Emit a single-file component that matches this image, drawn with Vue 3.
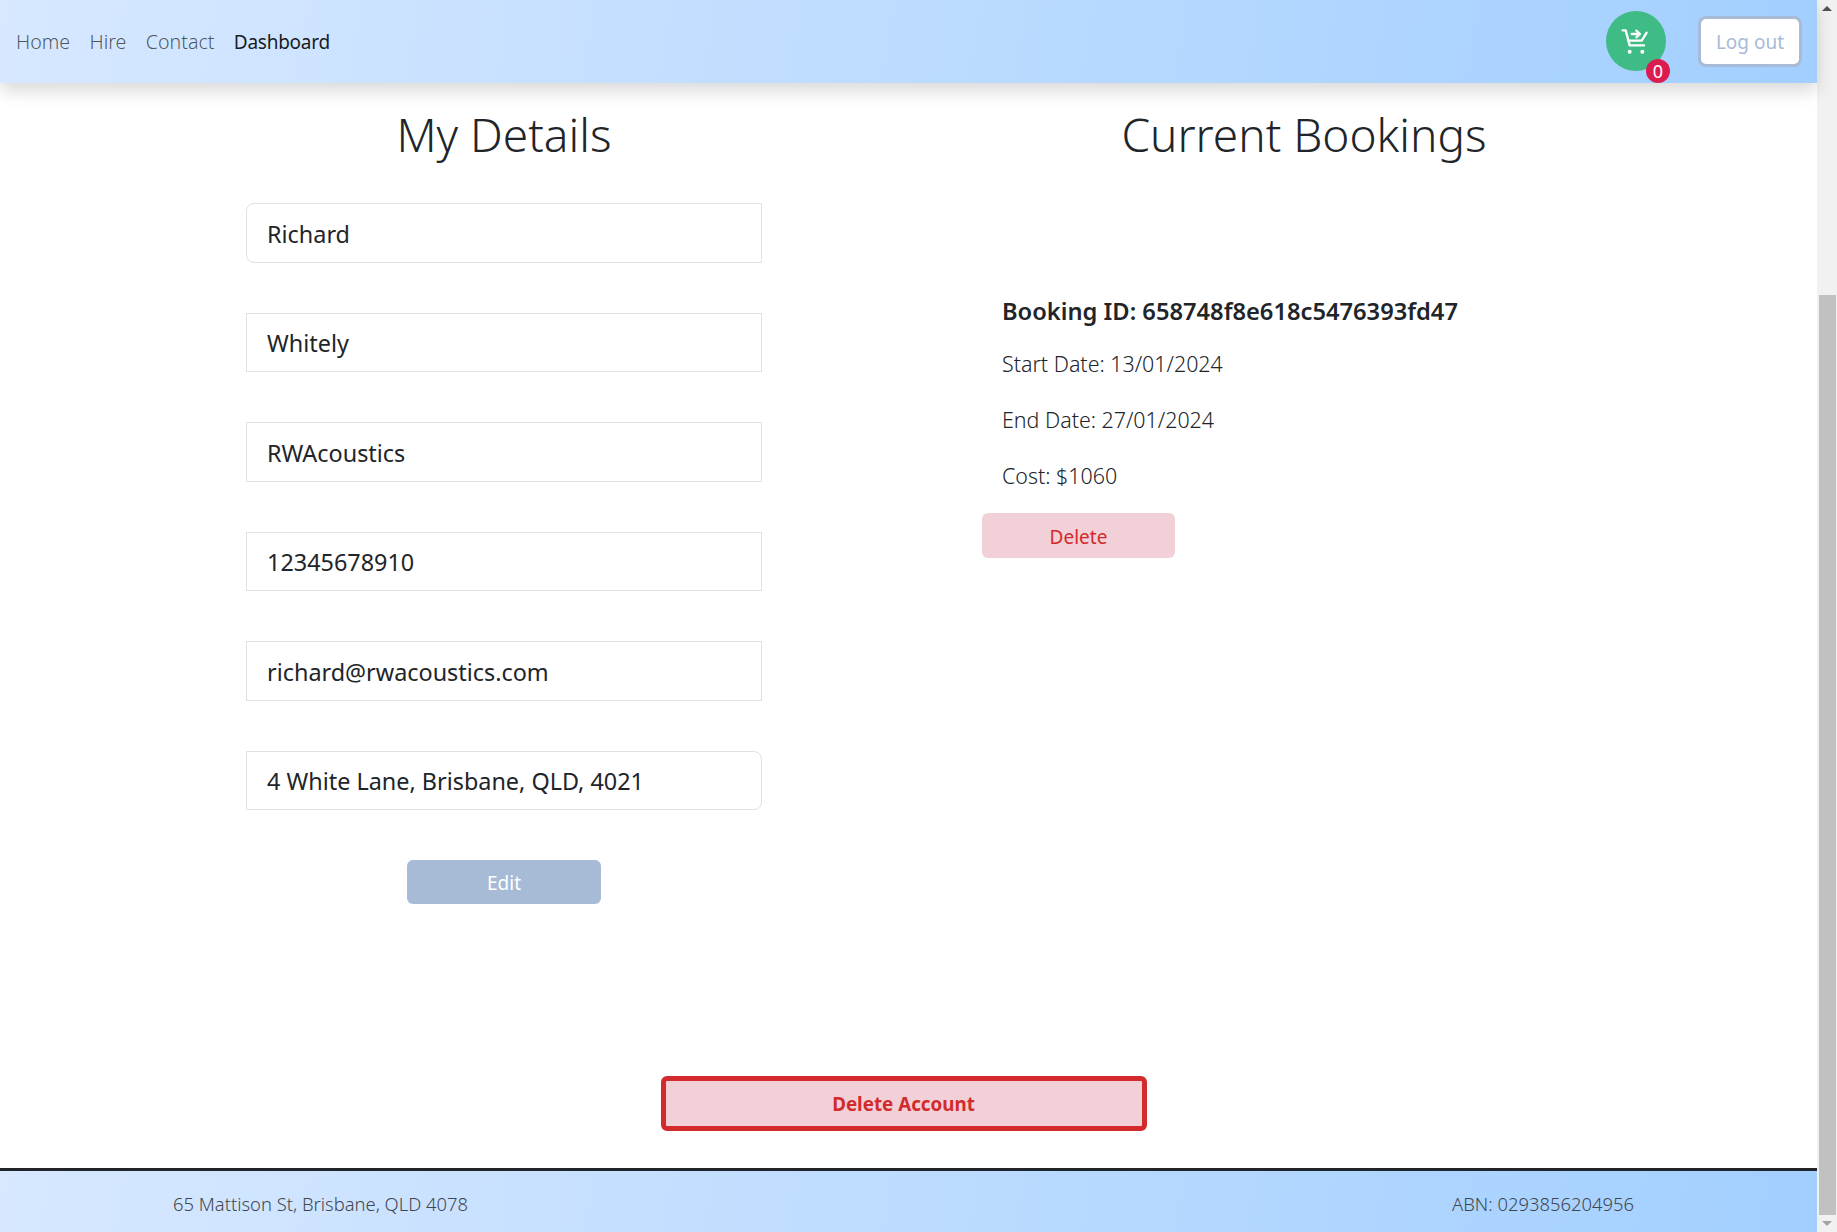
<script setup>
const fields = [
  { value: 'Richard', cls: 'first' },
  { value: 'Whitely', cls: '' },
  { value: 'RWAcoustics', cls: '' },
  { value: '12345678910', cls: '' },
  { value: 'richard@rwacoustics.com', cls: '' },
  { value: '4 White Lane, Brisbane, QLD, 4021', cls: 'last' }
]
const links = ['Home', 'Hire', 'Contact']
</script>

<template>
  <div class="window">
    <div class="page">
      <header class="navbar">
        <nav class="links">
          <a v-for="l in links" :key="l" class="link">{{ l }}</a>
          <a class="link active">Dashboard</a>
        </nav>
        <div class="actions">
          <div class="cart">
            <svg width="30" height="30" viewBox="93 78 90 90" fill="none" stroke="#fff" stroke-width="7" stroke-linecap="round" stroke-linejoin="round">
              <path d="M98 91H107L119 136H162" />
              <path d="M116 122H155L170 98" />
              <path d="M125 102H148M139 92L150 102L139 112" />
              <circle cx="119" cy="155" r="6" fill="#fff" stroke="none" />
              <circle cx="157" cy="155" r="6" fill="#fff" stroke="none" />
            </svg>
            <span class="badge">0</span>
          </div>
          <button class="logout">Log out</button>
        </div>
      </header>

      <main class="content">
        <section class="details">
          <h1 class="title">My Details</h1>
          <form class="form">
            <input v-for="f in fields" :key="f.value" class="field" :class="f.cls" :value="f.value" readonly />
            <button type="button" class="edit">Edit</button>
          </form>
        </section>
        <section class="bookings">
          <h1 class="title">Current Bookings</h1>
          <article class="booking">
            <h2 class="booking-id">Booking ID: 658748f8e618c5476393fd47</h2>
            <p class="line first-line">Start Date: 13/01/2024</p>
            <p class="line">End Date: 27/01/2024</p>
            <p class="line">Cost: $1060</p>
            <button class="delete">Delete</button>
          </article>
        </section>
      </main>

      <div class="danger">
        <button class="delete-account">Delete Account</button>
      </div>

      <footer class="footer">
        <span>65 Mattison St, Brisbane, QLD 4078</span>
        <span>ABN: 0293856204956</span>
      </footer>
    </div>

    <aside class="scrollbar">
      <div class="arrow up"></div>
      <div class="track"><div class="thumb"></div></div>
      <div class="arrow down"></div>
    </aside>
  </div>
</template>

<style>
html, body { margin: 0; overflow: hidden; background: #fff; }
</style>

<style scoped>
.window {
  display: flex;
  width: 1837px;
  height: 1232px;
  font-family: "Noto Sans", "Open Sans", sans-serif;
  color: #212529;
  overflow: hidden;
}
.page {
  width: 1817px;
  height: 1232px;
  display: flex;
  flex-direction: column;
}
.navbar {
  height: 83px;
  flex: none;
  display: flex;
  align-items: center;
  justify-content: space-between;
  padding: 0 15px 1px 16px;
  box-sizing: border-box;
  background: linear-gradient(100deg, #d7e8ff 0%, #a2cfff 100%);
  box-shadow: 0 8px 16px rgba(0, 0, 0, .15);
  position: relative;
}
.links { display: flex; align-items: baseline; gap: 19.4px; }
.link { font-size: 19.6px; font-weight: 300; color: rgba(0, 0, 0, .65); }
.link.active { color: rgba(0, 0, 0, .9); font-weight: 400; font-size: 19px; letter-spacing: -.25px; }
.actions { display: flex; align-items: center; gap: 32px; }
.cart {
  position: relative;
  width: 60px;
  height: 60px;
  border-radius: 50%;
  background: #3fbb85;
  display: flex;
  align-items: center;
  justify-content: center;
}
.badge {
  position: absolute;
  right: -4px;
  bottom: -12px;
  width: 24px;
  height: 24px;
  border-radius: 50%;
  background: #dc1c4f;
  color: #fff;
  font-size: 18px;
  line-height: 24px;
  text-align: center;
}
.logout {
  width: 104px;
  height: 51px;
  background: #fff;
  border: 3px solid #a7bbd6;
  border-radius: 8px;
  color: #a7bbd6;
  font: 400 19px "Noto Sans", sans-serif;
  padding: 1px 0 0;
}
.content {
  display: flex;
  flex: 1;
  min-height: 0;
}
.details { width: 1008px; flex: none; display: flex; flex-direction: column; align-items: center; }
.bookings { width: 592px; flex: none; display: flex; flex-direction: column; align-items: center; }
.title {
  margin: 20px 0 0;
  height: 62px;
  font-size: 46px;
  line-height: 62px;
  font-weight: 300;
}
.form {
  margin-top: 38px;
  display: flex;
  flex-direction: column;
  align-items: center;
  gap: 50px;
}
.field {
  width: 516px;
  height: 59.5px;
  box-sizing: border-box;
  border: 1px solid #dee2e6;
  border-radius: 0;
  padding: 2px 20px 0;
  font: 400 23.4px "Noto Sans", sans-serif;
  color: #212529;
  outline: none;
  background: #fff;
}
.field.first { border-radius: 8px 0 0 8px; }
.field.last { border-radius: 0 8px 8px 0; }
.edit {
  width: 194px;
  height: 44px;
  padding: 2px 0 0;
  background: #a7bbd6;
  border: 0;
  border-radius: 6px;
  color: #fff;
  font: 400 19px "Noto Sans", sans-serif;
}
.booking {
  align-self: stretch;
  margin-top: 128px;
  margin-left: -26px;
  display: flex;
  flex-direction: column;
  align-items: flex-start;
}
.booking-id {
  margin: 0 0 0 20px;
  font-size: 23.7px;
  line-height: 36px;
  font-weight: 600;
}
.line {
  margin: 20px 0 0 20px;
  font-size: 21.4px;
  line-height: 36px;
  font-weight: 300;
}
.first-line { margin-top: 17px; }
.delete {
  margin-top: 19px;
  width: 193px;
  height: 45px;
  padding: 2px 0 0;
  background: #f1d0d7;
  border: 0;
  border-radius: 6px;
  color: #d32a2c;
  font: 400 19px "Noto Sans", sans-serif;
}
.danger {
  flex: none;
  display: flex;
  justify-content: center;
  padding: 0 10px 37px 0;
}
.delete-account {
  width: 486px;
  height: 55px;
  box-sizing: border-box;
  background: #f1d0d7;
  border: 5px solid #d32a2c;
  border-radius: 6px;
  color: #d32a2c;
  font: 700 18.8px "Noto Sans", sans-serif;
}
.footer {
  flex: none;
  height: 64px;
  box-sizing: border-box;
  border-top: 3px solid #212529;
  display: flex;
  align-items: center;
  justify-content: space-between;
  padding: 4px 183px 0 173px;
  background: linear-gradient(100deg, #d7e8ff 0%, #a2cfff 100%);
  font-size: 18.4px;
  font-weight: 300;
  color: #3f4650;
}
.scrollbar {
  width: 20px;
  height: 1232px;
  background: #f1f1f1;
  display: flex;
  flex-direction: column;
}
.arrow { height: 17px; flex: none; position: relative; }
.arrow::after {
  content: "";
  position: absolute;
  left: 5px;
  border-left: 5px solid transparent;
  border-right: 5px solid transparent;
}
.arrow.up::after { top: 6px; border-bottom: 5px solid #505050; }
.arrow.down::after { top: 6px; border-top: 5px solid #a3a3a3; }
.track { flex: 1; padding-top: 278px; box-sizing: border-box; display: flex; }
.thumb { flex: 1; margin: 0 1px 0 2px; background: #c1c1c1; }
</style>
